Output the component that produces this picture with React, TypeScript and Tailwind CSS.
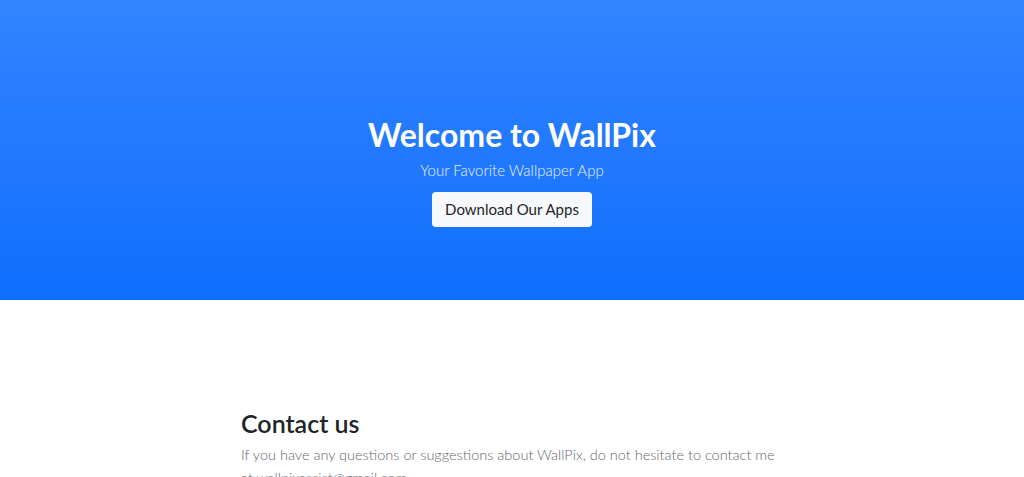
import React from 'react';

export default function App() {
  return (
    <div className="min-h-screen bg-white" style={{ fontFamily: 'Lato, "Noto Sans", sans-serif' }}>
      <header className="h-[300px] bg-gradient-to-b from-[#3284ff] to-[#0d6efd] flex flex-col items-center justify-center pt-[42px] text-white">
        <h1 className="text-[32px] font-bold leading-tight">Welcome to WallPix</h1>
        <p className="text-[15px] font-light mt-[4px] text-white/90">Your Favorite Wallpaper App</p>
        <button className="mt-[10px] h-[35px] px-[13px] bg-[#f8f9fa] text-[#212529] text-[15px] rounded-[4px]">
          Download Our Apps
        </button>
      </header>

      <section className="max-w-[542px] mx-auto pt-[108px]">
        <h2 className="text-[25px] font-semibold text-[#212529] leading-tight">Contact us</h2>
        <p className="mt-[5px] text-[14.5px] font-light text-[#5f676e] leading-[1.55]">
          If you have any questions or suggestions about WallPix, do not hesitate to contact me at wallpixassist@gmail.com
        </p>
      </section>
    </div>
  );
}
